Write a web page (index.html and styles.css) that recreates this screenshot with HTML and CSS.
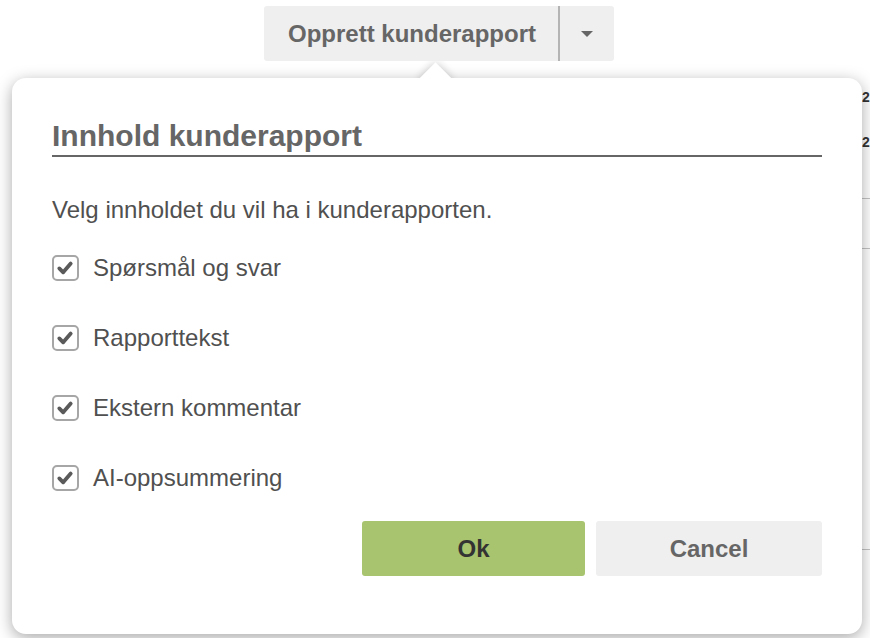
FILE: index.html
```html
<!DOCTYPE html>
<html lang="no">
<head>
<meta charset="utf-8">
<title>Innhold kunderapport</title>
<link rel="stylesheet" href="styles.css">
</head>
<body>
<div class="page">
  <header class="toolbar">
    <div class="split-btn">
      <button class="split-main" type="button">Opprett kunderapport</button>
      <button class="split-toggle" type="button" aria-label="Flere valg"><span class="caret"></span></button>
    </div>
  </header>

  <div class="backdrop">
    <div class="bg-cell bg-date">2</div>
    <div class="bg-cell bg-date2">2</div>
    <div class="bg-row"></div>
    <div class="bg-row bg-row2"></div>
    <div class="bg-row bg-row3"></div>
  </div>

  <section class="popover">
    <div class="arrow-wrap"><div class="arrow"></div></div>
    <h2 class="pop-title">Innhold kunderapport</h2>
    <p class="pop-intro">Velg innholdet du vil ha i kunderapporten.</p>
    <ul class="options">
      <li class="option"><span class="check"><svg viewBox="0 0 26 26" width="26" height="26"><polyline points="7.3,13.4 11.2,17.3 18.7,8.6" /></svg></span><span class="opt-label">Spørsmål og svar</span></li>
      <li class="option"><span class="check"><svg viewBox="0 0 26 26" width="26" height="26"><polyline points="7.3,13.4 11.2,17.3 18.7,8.6" /></svg></span><span class="opt-label">Rapporttekst</span></li>
      <li class="option"><span class="check"><svg viewBox="0 0 26 26" width="26" height="26"><polyline points="7.3,13.4 11.2,17.3 18.7,8.6" /></svg></span><span class="opt-label">Ekstern kommentar</span></li>
      <li class="option"><span class="check"><svg viewBox="0 0 26 26" width="26" height="26"><polyline points="7.3,13.4 11.2,17.3 18.7,8.6" /></svg></span><span class="opt-label">AI-oppsummering</span></li>
    </ul>
    <div class="actions">
      <button class="btn btn-ok" type="button">Ok</button>
      <button class="btn btn-cancel" type="button">Cancel</button>
    </div>
  </section>
</div>
</body>
</html>
```
FILE: styles.css
```css
html, body {
  margin: 0;
  padding: 0;
  background: #fff;
  overflow: hidden;
}
body {
  font-family: "Liberation Sans", Arial, sans-serif;
  width: 870px;
  height: 638px;
}
.page {
  position: relative;
  width: 870px;
  height: 638px;
}
.toolbar {
  display: flex;
  justify-content: flex-start;
  padding: 6px 0 0 264px;
}
.split-btn {
  display: flex;
  height: 55px;
  background: #efefef;
  border-radius: 3px;
}
.split-main, .split-toggle {
  border: 0;
  background: transparent;
  font-family: inherit;
  font-weight: bold;
  font-size: 24px;
  color: #666;
  padding: 0;
  margin: 0;
}
.split-main {
  width: 296px;
  text-align: center;
  border-right: 2px solid #b4b4b4;
  padding-left: 2px;
}
.split-toggle {
  width: 54px;
  display: flex;
  align-items: center;
  justify-content: center;
}
.caret {
  width: 0;
  height: 0;
  border-left: 6px solid transparent;
  border-right: 6px solid transparent;
  border-top: 6px solid #666;
  margin-top: 1px;
}

/* background page content peeking out on the right */
.backdrop {
  padding-left: 862px;
  color: #333;
  font-size: 14px;
  font-weight: bold;
  white-space: nowrap;
}
.bg-cell { height: 45px; line-height: 45px; }
.bg-date { margin-top: 14px; }
.bg-row { height: 1px; background: #c4c4c4; margin-top: 33px; }
.bg-row2 { margin-top: 49px; }
.bg-row3 { margin-top: 300px; }

.popover {
  position: absolute;
  left: 12px;
  top: 78px;
  width: 850px;
  box-sizing: border-box;
  height: 556px;
  padding: 40px 40px 0 40px;
  background: #fff;
  border-radius: 14px;
  box-shadow: 0 4px 16px rgba(0, 0, 0, 0.34);
}
.arrow-wrap {
  position: absolute;
  top: -17px;
  left: 400px;
  width: 48px;
  height: 17px;
  overflow: hidden;
}
.arrow {
  position: absolute;
  left: 12px;
  top: 6px;
  width: 23px;
  height: 23px;
  background: #fff;
  transform: rotate(45deg);
  box-shadow: 0 0 8px rgba(0, 0, 0, 0.22);
}
.pop-title {
  margin: 0;
  font-size: 30px;
  line-height: 36px;
  font-weight: bold;
  color: #666;
  padding-bottom: 1px;
  border-bottom: 2px solid #666;
}
.pop-intro {
  margin: 39px 0 0 0;
  font-size: 24px;
  line-height: 28px;
  color: #505050;
}
.options {
  list-style: none;
  margin: 31px 0 0 0;
  padding: 0;
  display: flex;
  flex-direction: column;
  gap: 44px;
}
.option {
  display: flex;
  align-items: center;
  height: 26px;
  gap: 14px;
}
.check {
  width: 27px;
  height: 26px;
  box-sizing: border-box;
  border: 2px solid #a6a6a6;
  border-radius: 5px;
  position: relative;
  flex: none;
}
.check svg {
  position: absolute;
  left: -2px;
  top: -2px;
}
.check polyline {
  fill: none;
  stroke: #5a5a5a;
  stroke-width: 3.8;
  stroke-linecap: round;
  stroke-linejoin: round;
}
.opt-label {
  font-size: 24px;
  color: #505050;
}
.actions {
  display: flex;
  justify-content: flex-end;
  gap: 11px;
  margin-top: 30px;
}
.btn {
  height: 55px;
  border: 0;
  border-radius: 3px;
  font-family: inherit;
  font-weight: bold;
  font-size: 24px;
}
.btn-ok {
  width: 223px;
  background: #a8c46e;
  color: #333;
}
.btn-cancel {
  width: 226px;
  background: #efefef;
  color: #666;
}
```
